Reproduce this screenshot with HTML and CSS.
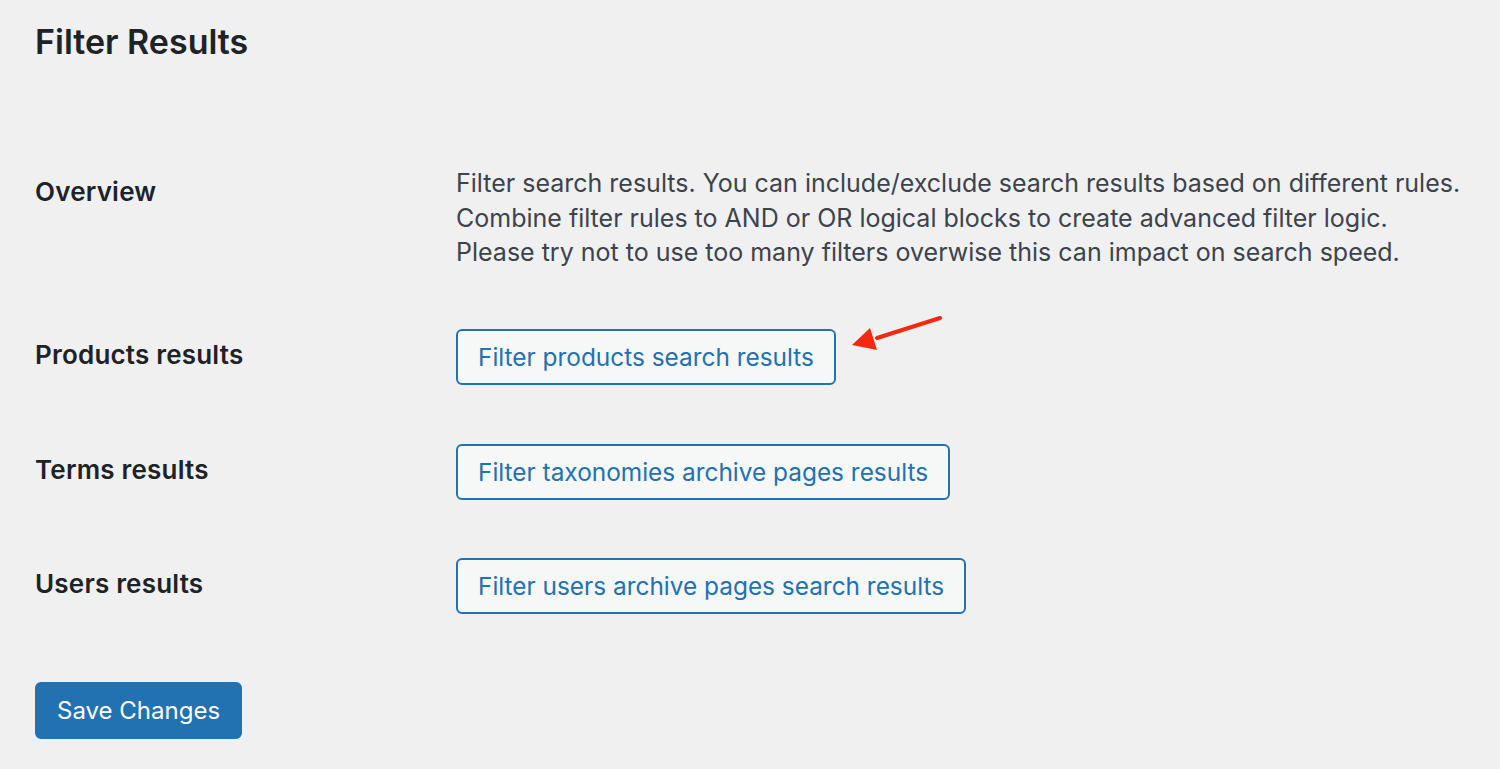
FILE: index.html
```html
<!DOCTYPE html>
<html lang="en">
<head>
<meta charset="utf-8">
<title>Filter Results</title>
<link rel="stylesheet" href="styles.css">
</head>
<body>
<div class="wrap">
  <h1 class="title">Filter Results</h1>
  <div class="form">
    <div class="row row-overview">
      <div class="th">Overview</div>
      <div class="td">
        <p class="desc">Filter search results. You can include/exclude search results based on different rules.<br>Combine filter rules to AND or OR logical blocks to create advanced filter logic.<br>Please try not to use too many filters overwise this can impact on search speed.</p>
      </div>
    </div>
    <div class="row row-products">
      <div class="th">Products results</div>
      <div class="td td-btn">
        <button class="btn" type="button">Filter products search results</button>
        <svg class="arrow" width="100" height="40" viewBox="0 0 100 40" aria-hidden="true">
          <line x1="89" y1="4" x2="26" y2="24" stroke="#f5290f" stroke-width="4" stroke-linecap="round"/>
          <polygon points="1,31 19,14 26,36" fill="#f5290f"/>
        </svg>
      </div>
    </div>
    <div class="row row-terms">
      <div class="th">Terms results</div>
      <div class="td td-btn">
        <button class="btn" type="button">Filter taxonomies archive pages results</button>
      </div>
    </div>
    <div class="row row-users">
      <div class="th">Users results</div>
      <div class="td td-btn">
        <button class="btn" type="button">Filter users archive pages search results</button>
      </div>
    </div>
  </div>
  <div class="submit">
    <button class="btn-primary" type="button">Save Changes</button>
  </div>
</div>
</body>
</html>
```

FILE: styles.css
```css
html, body {
  margin: 0;
  padding: 0;
  background: #f0f0f1;
}

body {
  font-family: Inter, "Liberation Sans", sans-serif;
  color: #1d2327;
}

.wrap {
  padding: 21px 0 0 35px;
}

.title {
  margin: 0;
  font-size: 34px;
  line-height: 41px;
  font-weight: 600;
  color: #1d2327;
}

.form {
  margin-top: 104px;
}

.row {
  display: flex;
  align-items: flex-start;
}

.th {
  width: 421px;
  flex: none;
  font-size: 26px;
  line-height: 34px;
  font-weight: 600;
  letter-spacing: 0.2px;
  color: #1d2327;
}

.td {
  flex: 1;
}

.row-overview .th {
  padding-top: 9px;
}

.desc {
  margin: 0;
  font-size: 25px;
  line-height: 34.5px;
  color: #3c434a;
}

.row-products { margin-top: 59px; }
.row-terms { margin-top: 59px; }
.row-users { margin-top: 58px; }

.row-products .th,
.row-terms .th,
.row-users .th {
  padding-top: 9px;
}

.td-btn {
  position: relative;
}

.btn {
  box-sizing: border-box;
  height: 56px;
  padding: 0 20px;
  border: 2px solid #2271b1;
  border-radius: 6px;
  background: #f6f7f7;
  color: #2271b1;
  font-family: Inter, "Liberation Sans", sans-serif;
  font-size: 24.4px;
  line-height: 52px;
  cursor: pointer;
}

.arrow {
  position: absolute;
  left: 395px;
  top: -15px;
}

.submit {
  margin-top: 68px;
}

.btn-primary {
  box-sizing: border-box;
  height: 57px;
  padding: 0 20px;
  border: 2px solid #2271b1;
  border-radius: 6px;
  background: #2271b1;
  color: #ffffff;
  font-family: Inter, "Liberation Sans", sans-serif;
  font-size: 24px;
  line-height: 53px;
  cursor: pointer;
}
```
